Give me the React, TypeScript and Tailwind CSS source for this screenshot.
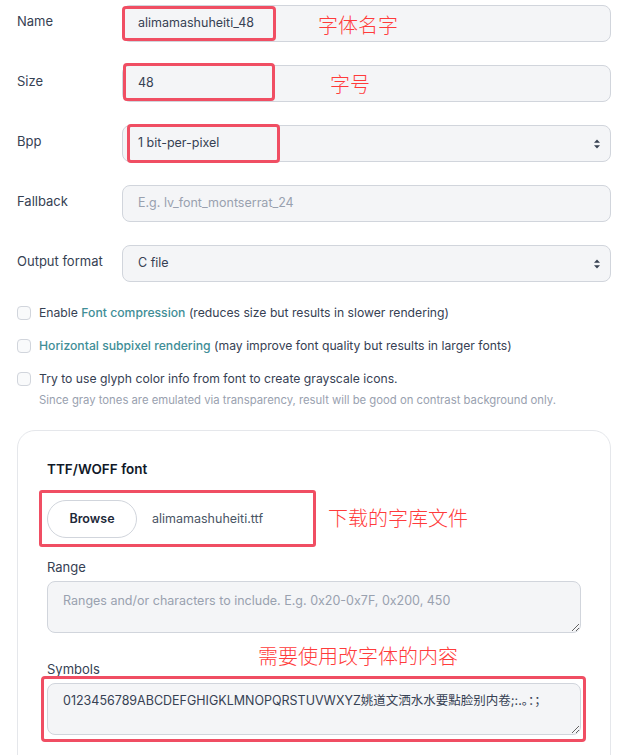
import React from 'react';

const cjk = { fontFamily: '"Noto Sans CJK SC", "Noto Sans", sans-serif' };

const Arrows: React.FC = () => (
  <svg width="8" height="11" viewBox="0 0 8 11" className="absolute right-[10px] top-1/2 -translate-y-1/2">
    <path d="M1 4.2 L4 1 L7 4.2 Z" fill="#374151" />
    <path d="M1 6.8 L4 10 L7 6.8 Z" fill="#374151" />
  </svg>
);

const Field: React.FC<{ label: string; children: React.ReactNode }> = ({ label, children }) => (
  <div className="flex">
    <div className="w-[105px] shrink-0 pt-[6px] text-[13px] leading-5 text-gray-700">{label}</div>
    <div className="relative flex-1">{children}</div>
  </div>
);

const inputCls =
  'h-[37px] w-full rounded-lg border border-gray-300 bg-[#f4f5f7] px-[15px] text-[12.5px] flex items-center';

const Check: React.FC<{ children: React.ReactNode }> = ({ children }) => (
  <div className="flex items-center gap-[8px] text-[12.2px] leading-5 text-gray-700">
    <span className="h-[14px] w-[14px] shrink-0 rounded-[4px] border border-gray-300 bg-gray-50" />
    <span>{children}</span>
  </div>
);

export default function App() {
  return (
    <div className="min-h-screen bg-white pl-[17px] pr-[19px] pt-[5px]" style={{ fontFamily: 'Inter, "Noto Sans CJK SC", sans-serif' }}>
      <div className="flex flex-col gap-[23px]">
        <Field label="Name">
          <div className={`${inputCls} text-gray-700`}>alimamashuheiti_48</div>
          <div className="absolute left-0 top-[1px] h-[35px] w-[154px] rounded-[4px] border-[3px] border-[#f04e63]" />
          <span className="absolute left-[196px] top-[8px] text-[20px] font-light leading-6 text-[#ff3b3b]" style={cjk}>字体名字</span>
        </Field>
        <Field label="Size">
          <div className={`${inputCls} text-gray-700`}>48</div>
          <div className="absolute left-[1px] top-[-2px] h-[38px] w-[152px] rounded-[4px] border-[3px] border-[#f04e63]" />
          <span className="absolute left-[208px] top-[7px] text-[20px] font-light leading-6 text-[#ff3b3b]" style={cjk}>字号</span>
        </Field>
        <Field label="Bpp">
          <div className={`${inputCls} text-gray-700`}>1 bit-per-pixel</div>
          <Arrows />
          <div className="absolute left-[5px] top-[-1px] h-[39px] w-[153px] rounded-[4px] border-[3px] border-[#f04e63]" />
        </Field>
        <Field label="Fallback">
          <div className={`${inputCls} text-gray-400`}>E.g. lv_font_montserrat_24</div>
        </Field>
        <Field label="Output format">
          <div className={`${inputCls} text-gray-700`}>C file</div>
          <Arrows />
        </Field>
      </div>

      <div className="mt-[21px] flex flex-col gap-[13px]">
        <Check>
          Enable <span className="font-medium text-[#3f8e97]">Font compression</span> (reduces size but results in slower rendering)
        </Check>
        <Check>
          <span className="font-medium text-[#3f8e97]">Horizontal subpixel rendering</span> (may improve font quality but results in larger fonts)
        </Check>
        <div>
          <Check>Try to use glyph color info from font to create grayscale icons.</Check>
          <div className="mt-[3px] pl-[22px] text-[11.3px] leading-4 text-gray-400">
            Since gray tones are emulated via transparency, result will be good on contrast background only.
          </div>
        </div>
      </div>

      <div className="mt-[22px] h-[400px] rounded-[18px] border border-gray-200 px-[29px] pt-[28px]">
        <div className="text-[13.5px] font-semibold leading-5 text-gray-900">TTF/WOFF font</div>

        <div className="relative mt-[21px] flex items-center gap-[15px]">
          <div className="flex h-[38px] w-[90px] items-center justify-center rounded-full border border-gray-300 text-[12.5px] font-semibold text-gray-800">
            Browse
          </div>
          <span className="text-[12.5px] text-gray-600">alimamashuheiti.ttf</span>
          <div className="absolute left-[-8px] top-[-10px] h-[57px] w-[277px] rounded-[3px] border-[3px] border-[#f04e63]" />
          <span className="absolute left-[281px] top-[6px] text-[20px] font-light leading-6 text-[#ff3b3b]" style={cjk}>下载的字库文件</span>
        </div>

        <div className="mt-[19px] text-[13px] leading-5 text-gray-700">Range</div>
        <textarea
          readOnly
          className="mt-[4px] block h-[52px] w-full rounded-lg border border-gray-300 bg-[#f4f5f7] px-[15px] py-[9px] text-[12.5px] leading-5 text-gray-700 placeholder:text-gray-400 outline-none"
          placeholder="Ranges and/or characters to include. E.g. 0x20-0x7F, 0x200, 450"
        />

        <div className="relative mt-[26px] text-[13px] leading-5 text-gray-700">
          Symbols
          <span className="absolute left-[211px] top-[-15px] text-[20px] font-light leading-6 text-[#ff3b3b]" style={cjk}>需要使用改字体的内容</span>
        </div>
        <div className="relative mt-[4px]">
          <textarea
            readOnly
            wrap="off"
            className="block h-[52px] w-full overflow-hidden rounded-lg border border-gray-300 bg-[#f4f5f7] px-[15px] py-[7px] text-[12.5px] leading-5 text-gray-700 outline-none"
            defaultValue="0123456789ABCDEFGHIGKLMNOPQRSTUVWXYZ姚道文洒水水要點脸别内卷;:.。：；"
          />
          <div className="pointer-events-none absolute left-[-6px] right-[-5px] top-[-7px] bottom-[-7px] rounded-[4px] border-[3px] border-[#f04e63]" />
        </div>
      </div>
    </div>
  );
}
